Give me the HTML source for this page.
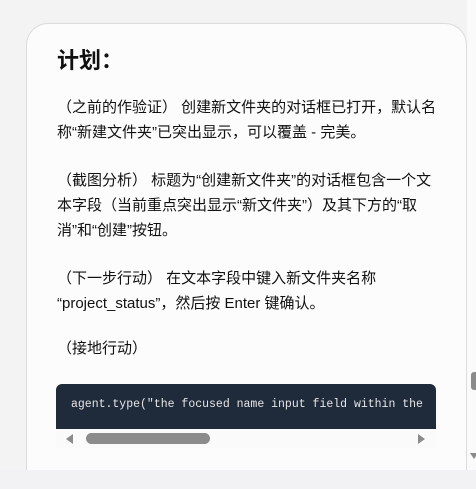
<!DOCTYPE html>
<html><head><meta charset="utf-8"><style>
html,body{margin:0;padding:0;width:476px;height:489px;overflow:hidden;background:#f3f3f4;font-family:"Liberation Sans","Noto Sans CJK SC",sans-serif;}
#w{position:relative;width:476px;height:489px;overflow:hidden;}
.card{position:absolute;left:26px;top:23px;width:439px;height:460px;background:#fcfcfc;border:1px solid #dcdcdc;border-bottom:none;border-radius:22px 22px 0 0;}
.bottom{position:absolute;left:0;top:470px;width:476px;height:19px;background:#f2f2f4;}
h1{position:absolute;left:57px;top:43px;margin:0;font-size:22px;font-weight:bold;color:#111;}
p{position:absolute;left:57px;width:380px;margin:0;font-size:15px;line-height:25px;color:#111;}
.code{position:absolute;left:56px;top:384px;width:380px;height:45px;background:#1f2a3a;border-radius:6px 6px 0 0;overflow:hidden;}
.code span{position:absolute;left:15px;top:14px;font-family:"Liberation Mono","DejaVu Sans Mono",monospace;font-size:11.5px;color:#e6e6e6;white-space:pre;}
.hs{position:absolute;left:56px;top:429px;width:380px;height:19px;background:#fafafa;}
.thumb{position:absolute;left:86px;top:433px;width:124px;height:11px;background:#8b8b8b;border-radius:6px;}
.vs{position:absolute;left:467px;top:0;width:9px;height:470px;background:#fafafa;}
.vt{position:absolute;left:471px;top:372px;width:5px;height:18px;background:#8b8b8b;border-radius:3px 0 0 3px;}
</style></head><body><div id="w">
<div class="vs"></div><div class="vt"></div>
<div style="position:absolute;left:470px;top:453px;width:0;height:0;border-left:4px solid transparent;border-right:4px solid transparent;border-top:6px solid #8b8b8b"></div>
<div class="card"></div>
<div class="bottom"></div>
<h1>计划：</h1>
<p style="top:95px">（之前的作验证） 创建新文件夹的对话框已打开，默认名称“新建文件夹”已突出显示，可以覆盖 - 完美。</p>
<p style="top:168px">（截图分析） 标题为“创建新文件夹”的对话框包含一个文本字段（当前重点突出显示“新文件夹”）及其下方的“取消”和“创建”按钮。</p>
<p style="top:266px">（下一步行动） 在文本字段中键入新文件夹名称 “project_status”，然后按 Enter 键确认。</p>
<p style="top:336px">（接地行动）</p>
<div class="code"><span>agent.type("the focused name input field within the</span></div>
<div class="hs"></div>
<div style="position:absolute;left:66px;top:434px;width:0;height:0;border-top:5px solid transparent;border-bottom:5px solid transparent;border-right:7px solid #8b8b8b"></div>
<div class="thumb"></div>
<div style="position:absolute;left:418px;top:434px;width:0;height:0;border-top:5px solid transparent;border-bottom:5px solid transparent;border-left:7px solid #8b8b8b"></div>
</div></body></html>
